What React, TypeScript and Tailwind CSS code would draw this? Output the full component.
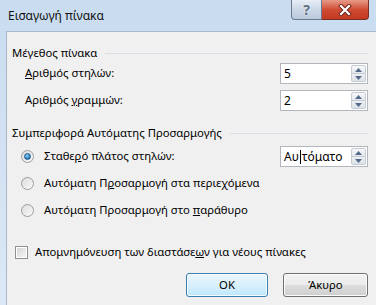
import React from "react";

const Arrow = ({ up }: { up: boolean }) => (
  <svg width="7" height="4" viewBox="0 0 7 4">
    {up ? <path d="M0 4 L3.5 0 L7 4 Z" fill="#55698a" /> : <path d="M0 0 L7 0 L3.5 4 Z" fill="#55698a" />}
  </svg>
);

const SpinBox = ({ children }: { children: React.ReactNode }) => (
  <div className="flex h-[21px] w-[88px] items-stretch border border-[#b3b6bc] bg-white">
    <div className="flex flex-1 items-center pl-[3px] text-[12px] text-black">{children}</div>
    <div className="flex w-[16px] flex-col py-[1px] pr-[1px]">
      <div className="flex flex-1 items-center justify-center rounded-t-[2px] border border-[#c6ccd4] bg-gradient-to-b from-[#f7f8fa] to-[#e4e8ed]">
        <Arrow up />
      </div>
      <div className="flex flex-1 items-center justify-center rounded-b-[2px] border border-t-0 border-[#c6ccd4] bg-gradient-to-b from-[#eef1f4] to-[#dde2e8]">
        <Arrow up={false} />
      </div>
    </div>
  </div>
);

const Radio = ({ checked }: { checked?: boolean }) => (
  <div className="flex h-[13px] w-[13px] items-center justify-center rounded-full border border-[#9a9c9e] bg-gradient-to-br from-[#dcdcdc] to-[#fbfbfb]">
    {checked ? (
      <div className="h-[7px] w-[7px] rounded-full border border-[#1d5a8a] bg-[radial-gradient(circle_at_40%_35%,#9fd3f5,#2a86c8_60%,#1a5f95)]" />
    ) : (
      <div className="h-[9px] w-[9px] rounded-full bg-gradient-to-br from-[#e0e0e0] to-[#f6f6f6]" />
    )}
  </div>
);

export default function App() {
  return (
    <div className="flex h-[305px] w-[376px] flex-col overflow-hidden bg-gradient-to-b from-[#c9dcf0] to-[#dce8f5] font-['Noto_Sans',sans-serif] text-[11.3px] text-black">
      {/* Title bar */}
      <div className="flex h-[31px] items-start">
        <div className="flex h-[31px] items-center pl-[8px] text-[12px] text-[#111]">Εισαγωγή πίνακα</div>
        <div className="ml-auto mr-[7px] flex">
          <div className="flex h-[20px] w-[31px] items-center justify-center rounded-bl-[4px] border border-t-0 border-[#6a7b90] bg-gradient-to-b from-[#e7eef6] via-[#ccd8e6] to-[#b9c9db] text-[14px] font-bold leading-none text-[#5b6d82] [text-shadow:0_0_2px_#ffffff]">
            ?
          </div>
          <div className="flex h-[20px] w-[47px] items-center justify-center rounded-br-[4px] border border-l-0 border-t-0 border-[#7a2f25] bg-gradient-to-b from-[#e59a88] via-[#d04b33] to-[#c23a20]">
            <svg width="14" height="12" viewBox="0 0 14 12">
              <path d="M3 2 L11 10 M11 2 L3 10" stroke="#6b2218" strokeWidth="4" strokeLinecap="square" />
              <path d="M3 2 L11 10 M11 2 L3 10" stroke="#ffffff" strokeWidth="2.2" strokeLinecap="square" />
            </svg>
          </div>
        </div>
      </div>

      {/* Body */}
      <div className="flex flex-1">
        <div className="w-[6px]" />
        <div className="flex flex-1 flex-col border-l border-t border-[#a9b8c9] bg-[#f0f0f0] pl-[5px] pr-[8px]">
          {/* header 1 */}
          <div className="mt-[13px] flex h-[16px] items-center">
            <span>Μέγεθος πίνακα</span>
            <div className="ml-[8px] h-px flex-1 bg-[#d9dfe6]" />
          </div>
          <div className="mt-[2px] flex h-[21px] items-center justify-between">
            <span className="pl-[13px]">
              <u>Α</u>ριθμός στηλών:
            </span>
            <SpinBox>5</SpinBox>
          </div>
          <div className="mt-[6px] flex h-[21px] items-center justify-between">
            <span className="pl-[13px]">
              Αριθμός <u>γ</u>ραμμών:
            </span>
            <SpinBox>2</SpinBox>
          </div>

          {/* header 2 */}
          <div className="mt-[14px] flex h-[16px] items-center">
            <span>Συμπεριφορά Αυτόματης Προσαρμογής</span>
            <div className="ml-[8px] h-px flex-1 bg-[#d9dfe6]" />
          </div>
          <div className="mt-[5px] flex h-[21px] items-center justify-between">
            <div className="flex items-center pl-[9px]">
              <Radio checked />
              <span className="ml-[10px]">
                Σταθε<u>ρ</u>ό πλάτος στηλών:
              </span>
            </div>
            <SpinBox>
              <span>Αυ</span>
              <span className="mx-[1px] inline-block h-[14px] w-px bg-black" />
              <span>τόματο</span>
            </SpinBox>
          </div>
          <div className="mt-[6px] flex h-[21px] items-center">
            <div className="flex items-center pl-[9px]">
              <Radio />
              <span className="ml-[10px]">
                Αυτόματη Π<u>ρ</u>οσαρμογή στα περιεχόμενα
              </span>
            </div>
          </div>
          <div className="mt-[6px] flex h-[21px] items-center">
            <div className="flex items-center pl-[9px]">
              <Radio />
              <span className="ml-[10px]">
                Αυτόματη Προσαρμογή στο <u>π</u>αράθυρο
              </span>
            </div>
          </div>

          {/* checkbox */}
          <div className="mt-[23px] flex h-[16px] items-center pl-[3px]">
            <div className="flex h-[13px] w-[13px] items-center justify-center border border-[#8f8f8f] bg-white">
              <div className="h-[9px] w-[9px] bg-gradient-to-br from-[#d6d6d6] to-[#f4f4f4]" />
            </div>
            <span className="ml-[7px]">
              Απομνημόνευση των διαστάσε<u>ω</u>ν για νέους πίνακες
            </span>
          </div>

          {/* buttons */}
          <div className="mt-[13px] flex h-[24px] justify-end gap-[15px]">
            <div className="flex w-[82px] items-center justify-center rounded-[3px] border border-[#3c7fb1] bg-gradient-to-b from-[#eaf6fd] via-[#d9f0fc] to-[#bee6fd] shadow-[inset_0_0_0_1px_#f4fbff]">
              OK
            </div>
            <div className="flex w-[85px] items-center justify-center rounded-[3px] border border-[#707070] bg-[linear-gradient(to_bottom,#f2f2f2_0%,#ebebeb_50%,#dddddd_50%,#cfcfcf_100%)] shadow-[inset_0_0_0_1px_#fcfcfc]">
              Άκυρο
            </div>
          </div>
        </div>
      </div>
    </div>
  );
}
